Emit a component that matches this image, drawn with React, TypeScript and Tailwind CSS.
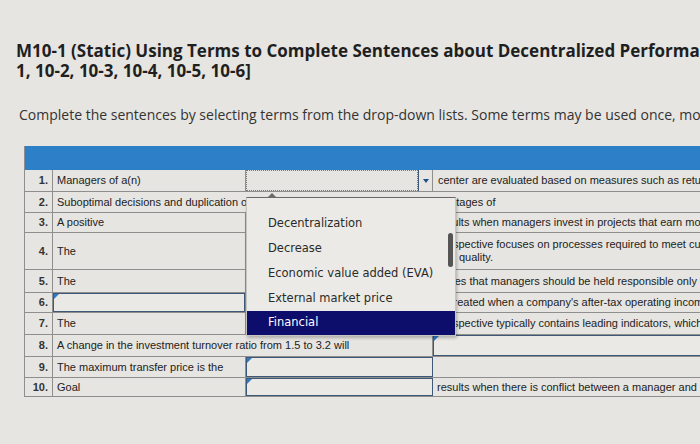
import React from "react";

const Marker = () => (
  <span className="absolute left-0 top-0 w-0 h-0 border-t-[5px] border-t-[#2f7ac6] border-r-[5px] border-r-transparent" />
);

const Box = () => (
  <div className="relative h-full w-full border border-[#3e5977] bg-[#eae9e5]">
    <Marker />
  </div>
);

const Num = ({ n }: { n: string }) => (
  <div className="w-[28px] shrink-0 border-r border-[#8e8e8e] flex items-center justify-end pr-[4px] font-bold text-[#333]">
    {n}
  </div>
);

const cellB = "shrink-0 border-r border-[#8e8e8e] flex items-center whitespace-nowrap";

export default function App() {
  return (
    <div className="relative w-[700px] h-[444px] overflow-hidden bg-[#e6e5e1] text-[#222]">
      <div className="pl-[16px] pt-[41px] font-['Open_Sans',sans-serif] font-bold text-[17px] leading-[20px] text-[#1f1f1f] whitespace-nowrap">
        <div>M10-1 (Static) Using Terms to Complete Sentences about Decentralized Performance Evaluation [LO 10-</div>
        <div>1, 10-2, 10-3, 10-4, 10-5, 10-6]</div>
      </div>
      <div className="pl-[19px] mt-[25px] font-['Open_Sans',sans-serif] text-[14px] leading-[18px] text-[#333] whitespace-nowrap">
        Complete the sentences by selecting terms from the drop-down lists. Some terms may be used once, more than once, or not at all.
      </div>

      <div className="mt-[22px] ml-[24px] w-[830px] border-l border-[#8e8e8e] font-['Liberation_Sans',Arial,sans-serif] text-[11px] leading-[13px]">
        <div className="h-[24px] bg-[#2d80c8]" />

        {/* Row 1 */}
        <div className="flex h-[22px] border-b border-[#8e8e8e]">
          <Num n="1." />
          <div className={`${cellB} w-[193px] pl-[4px]`}>Managers of a(n)</div>
          <div className="w-[187px] shrink-0 flex border-r border-[#8e8e8e]">
            <div className="flex-1 border border-dotted border-[#777]" />
            <div className="w-[14px] border-l border-[#3e5977] flex items-center justify-center">
              <span className="w-0 h-0 border-l-[3.5px] border-r-[3.5px] border-t-[4px] border-l-transparent border-r-transparent border-t-[#1f4f86]" />
            </div>
          </div>
          <div className={`${cellB} w-[420px] pl-[5px]`}>center are evaluated based on measures such as return on investment.</div>
        </div>

        {/* Row 2 */}
        <div className="flex h-[21px] border-b border-[#8e8e8e]">
          <Num n="2." />
          <div className={`${cellB} w-[800px] pl-[4px]`}>
            Suboptimal decisions and duplication of activities and costs are potential disadvantages of
          </div>
        </div>

        {/* Row 3 */}
        <div className="flex h-[20px] border-b border-[#8e8e8e]">
          <Num n="3." />
          <div className={`${cellB} w-[193px] pl-[4px]`}>A positive</div>
          <div className={`${cellB} w-[187px]`} />
          <div className={`${cellB} w-[420px] pl-[4px]`}>results when managers invest in projects that earn more than the minimum rate.</div>
        </div>

        {/* Row 4 */}
        <div className="flex h-[37px] border-b border-[#8e8e8e]">
          <Num n="4." />
          <div className={`${cellB} w-[193px] pl-[4px]`}>The</div>
          <div className={`${cellB} w-[187px]`} />
          <div className="shrink-0 border-r border-[#8e8e8e] w-[420px] pl-[4px] flex flex-col justify-center whitespace-nowrap">
            <div>perspective focuses on processes required to meet customer needs for cost, time and</div>
            <div className="pl-[22px]">quality.</div>
          </div>
        </div>

        {/* Row 5 */}
        <div className="flex h-[23px] border-b border-[#8e8e8e]">
          <Num n="5." />
          <div className={`${cellB} w-[193px] pl-[4px]`}>The</div>
          <div className={`${cellB} w-[187px]`} />
          <div className={`${cellB} w-[420px] pl-[4px]`}>states that managers should be held responsible only for what they control.</div>
        </div>

        {/* Row 6 */}
        <div className="flex h-[20px] border-b border-[#8e8e8e]">
          <Num n="6." />
          <div className="w-[193px] shrink-0 border-r border-[#8e8e8e]">
            <Box />
          </div>
          <div className={`${cellB} w-[187px]`} />
          <div className={`${cellB} w-[420px] pl-[4px]`}>is created when a company's after-tax operating income exceeds its cost of capital.</div>
        </div>

        {/* Row 7 */}
        <div className="flex h-[22px] border-b border-[#8e8e8e]">
          <Num n="7." />
          <div className={`${cellB} w-[193px] pl-[4px]`}>The</div>
          <div className={`${cellB} w-[187px]`} />
          <div className={`${cellB} w-[420px] pl-[4px]`}>perspective typically contains leading indicators, which predict future performance.</div>
        </div>

        {/* Row 8 */}
        <div className="flex h-[22px] border-b border-[#8e8e8e]">
          <Num n="8." />
          <div className={`${cellB} w-[380px] pl-[4px]`}>A change in the investment turnover ratio from 1.5 to 3.2 will</div>
          <div className="w-[420px] shrink-0">
            <Box />
          </div>
        </div>

        {/* Row 9 */}
        <div className="flex h-[21px] border-b border-[#8e8e8e]">
          <Num n="9." />
          <div className={`${cellB} w-[193px] pl-[4px]`}>The maximum transfer price is the</div>
          <div className="w-[187px] shrink-0">
            <Box />
          </div>
          <div className={`${cellB} w-[420px]`} />
        </div>

        {/* Row 10 */}
        <div className="flex h-[19px] border-b border-[#8e8e8e]">
          <Num n="10." />
          <div className={`${cellB} w-[193px] pl-[4px]`}>Goal</div>
          <div className="w-[187px] shrink-0">
            <Box />
          </div>
          <div className={`${cellB} w-[420px] pl-[4px]`}>results when there is conflict between a manager and the company's goals.</div>
        </div>
      </div>

      {/* Dropdown popup */}
      <div className="absolute left-[246px] top-[197px] w-[210px] h-[139px] z-10 bg-[#ebeae6] border border-[#c4c4c0] border-t-dashed border-t-[#6a6a6a] shadow-[1px_2px_3px_rgba(0,0,0,0.25)] font-['DejaVu_Sans',Verdana,sans-serif] text-[11.5px] text-[#2a2a2a]">
        <span className="absolute -top-[5px] left-[20px] w-0 h-0 border-l-[5px] border-r-[5px] border-b-[5px] border-l-transparent border-r-transparent border-b-[#6a6a6a]" />
        <div className="pt-[13px]">
          <div className="h-[25px] flex items-center pl-[21px]">Decentralization</div>
          <div className="h-[25px] flex items-center pl-[21px]">Decrease</div>
          <div className="h-[25px] flex items-center pl-[21px]">Economic value added (EVA)</div>
          <div className="h-[25px] flex items-center pl-[21px]">External market price</div>
          <div className="h-[24px] flex items-center pl-[21px] bg-[#0d0d6c] text-white">Financial</div>
        </div>
        <div className="absolute left-[201px] top-[35px] w-[5px] h-[34px] rounded-full bg-[#555]" />
      </div>
    </div>
  );
}
